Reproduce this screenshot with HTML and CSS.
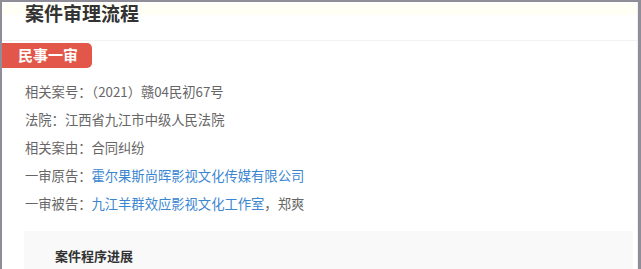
FILE: index.html
```html
<!DOCTYPE html>
<html lang="zh-CN">
<head>
    <meta charset="UTF-8">
    <title>案件审理流程</title>
    <link rel="stylesheet" href="styles.css">
</head>
<body>
    <div class="frame">
        <div class="panel">
            <div class="panel-head">
                <h2>案件审理流程</h2>
            </div>

            <div class="stage">
                <span class="stage-tag">民事一审</span>

                <ul class="case-info">
                    <li>相关案号：（2021）赣04民初67号</li>
                    <li>法院：江西省九江市中级人民法院</li>
                    <li>相关案由：合同纠纷</li>
                    <li>一审原告：<a href="#">霍尔果斯尚晖影视文化传媒有限公司</a></li>
                    <li>一审被告：<a href="#">九江羊群效应影视文化工作室</a>，郑爽</li>
                </ul>

                <div class="progress">
                    <h3>案件程序进展</h3>
                </div>
            </div>
        </div>
    </div>
</body>
</html>
```

FILE: styles.css
```css
body {
    margin: 0;
    padding: 0;
    font-family: "Noto Sans CJK SC", "Liberation Sans", sans-serif;
    background-color: #8f8e98;
}

.frame {
    height: 269px;
    padding: 2px 3px 0 2px;
    box-sizing: border-box;
    overflow: hidden;
}

.panel {
    background: #fff;
    height: 100%;
    border-right: 1px solid #f0f0f0;
}

.panel-head {
    height: 38px;
    border-bottom: 1px solid #f2f2f2;
    background: linear-gradient(#fff 0, #fffff6 4px, #fffff6 12px, #fff 14px);
}

.panel-head h2 {
    margin: 0;
    padding-left: 23px;
    font-size: 19px;
    line-height: 22px;
    font-weight: bold;
    color: #333;
}

.stage {
    padding-top: 1px;
}

.stage-tag {
    display: inline-block;
    width: 74px;
    height: 25px;
    line-height: 24px;
    padding-left: 16px;
    background: #e2574a;
    color: #fff;
    font-size: 15px;
    font-weight: bold;
    border-radius: 0 5px 5px 0;
}

.case-info {
    list-style: none;
    margin: 10px 0 0;
    padding: 0 0 0 23px;
}

.case-info li {
    height: 28px;
    line-height: 28px;
    font-size: 13.3px;
    color: #666;
}

.case-info a {
    color: #3b86d0;
    text-decoration: none;
}

.progress {
    margin: 13px 4px 0 22px;
    height: 60px;
    padding: 15px 0 0 31px;
    background: #f9f9f9;
}

.progress h3 {
    margin: 0;
    font-size: 13px;
    line-height: 20px;
    font-weight: bold;
    color: #333;
}
```
